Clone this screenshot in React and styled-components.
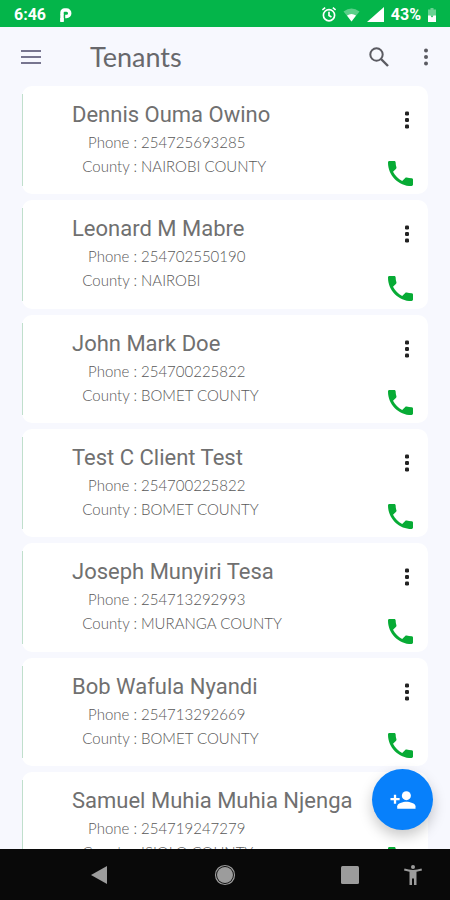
import React from "react";
import styled, { createGlobalStyle } from "styled-components";

const GlobalStyle = createGlobalStyle`
  * { box-sizing: border-box; }
  body { margin: 0; background: #f7f8fe; font-family: Roboto, sans-serif; }
  button { border: 0; padding: 0; background: none; color: inherit; font: inherit; cursor: pointer; }
  svg { display: block; }
  h1, h2, p, ul, dl, dd { margin: 0; padding: 0; }
`;

const Screen = styled.div`
  display: flex;
  flex-direction: column;
  height: 100vh;
  overflow: hidden;
  background: #f7f8fe;
`;

const StatusBar = styled.div`
  display: flex;
  align-items: center;
  flex: none;
  height: 27px;
  padding: 2px 14px 0 14px;
  background: #04b54a;
  color: #fff;
  font-size: 16px;
  font-weight: 700;
`;

const StatusIcons = styled.div`
  display: flex;
  align-items: center;
  gap: 7px;
  margin-left: auto;
`;

const ParkingMark = styled.svg`
  margin-left: 14px;
`;

const Toolbar = styled.header`
  display: flex;
  align-items: center;
  flex: none;
  height: 59px;
  padding: 0 18px 0 20px;
  color: #5b5b62;
`;

const IconButton = styled.button`
  display: grid;
  place-items: center;
  flex: none;
  width: ${(p) => p.$width}px;
  height: 32px;
`;

const Title = styled.h1`
  flex: 1;
  margin-left: 48px;
  color: #68686c;
  font: 400 27px/36px Lato, sans-serif;
`;

const ToolbarActions = styled.div`
  display: flex;
  gap: 30px;
`;

const TenantList = styled.ul`
  display: flex;
  flex: 1;
  flex-direction: column;
  gap: 6px;
  min-height: 0;
  padding: 0 22px;
  overflow: hidden;
  list-style: none;
`;

const Card = styled.li`
  position: relative;
  display: flex;
  flex: 0 0 14.2%;
  justify-content: space-between;
  min-height: 108px;
  padding: 14px 15px 5px 50px;
  border-radius: 10px;
  background: #fff;

  &::before {
    content: "";
    position: absolute;
    top: 8px;
    bottom: 8px;
    left: 0;
    width: 1px;
    background: #c0dfcc;
  }
`;

const Name = styled.h2`
  color: #707070;
  font-size: 22px;
  font-weight: 400;
  line-height: 30px;
  white-space: nowrap;
`;

const Details = styled.dl`
  display: grid;
  grid-template-columns: 65px auto;
  column-gap: 4px;
  color: #585858;
  font: 300 15px/24px Lato, sans-serif;
  white-space: nowrap;

  dt { text-align: right; }
`;

const CardActions = styled.div`
  display: flex;
  flex-direction: column;
  align-items: flex-end;
  justify-content: space-between;
`;

const MenuButton = styled.button`
  display: grid;
  place-items: center;
  width: 12px;
  height: 40px;
  color: #222;
`;

const CallButton = styled.button`
  display: grid;
  place-items: center;
  width: 26px;
  height: 31px;
  color: #07ab35;
`;

const AddButton = styled.button`
  position: fixed;
  right: 17px;
  bottom: 70px;
  display: grid;
  place-items: center;
  width: 61px;
  height: 61px;
  border-radius: 50%;
  background: #0780fb;
  color: #fff;
  box-shadow: 0 6px 14px rgba(0, 0, 0, 0.22);
`;

const NavBar = styled.nav`
  display: flex;
  align-items: center;
  gap: 45px;
  flex: none;
  height: 51px;
  padding: 0 28px 0 90px;
  background: #090909;
  color: #9c9c9c;
`;

const NavKeys = styled.div`
  display: flex;
  flex: 1;
  align-items: center;
  justify-content: space-between;
`;

const Dots = () => (
  <svg width="6" height="18" viewBox="0 0 6 18" fill="currentColor" aria-hidden="true">
    <circle cx="3" cy="2.5" r="2" />
    <circle cx="3" cy="9" r="2" />
    <circle cx="3" cy="15.5" r="2" />
  </svg>
);

const SquareDots = () => (
  <svg width="6" height="18" viewBox="0 0 6 18" fill="currentColor" aria-hidden="true">
    <rect x="1" y="0.5" width="4" height="4" rx="1.2" />
    <rect x="1" y="7" width="4" height="4" rx="1.2" />
    <rect x="1" y="13.5" width="4" height="4" rx="1.2" />
  </svg>
);

const tenants = [
  { name: "Dennis Ouma Owino", phone: "254725693285", county: "NAIROBI COUNTY" },
  { name: "Leonard M Mabre", phone: "254702550190", county: "NAIROBI" },
  { name: "John Mark Doe", phone: "254700225822", county: "BOMET COUNTY" },
  { name: "Test C Client Test", phone: "254700225822", county: "BOMET COUNTY" },
  { name: "Joseph Munyiri Tesa", phone: "254713292993", county: "MURANGA COUNTY" },
  { name: "Bob Wafula Nyandi", phone: "254713292669", county: "BOMET COUNTY" },
  { name: "Samuel Muhia Muhia Njenga", phone: "254719247279", county: "ISIOLO COUNTY" },
];

const TenantCard = ({ tenant }) => (
  <Card>
    <div>
      <Name>{tenant.name}</Name>
      <Details>
        <dt>Phone :</dt>
        <dd>{tenant.phone}</dd>
        <dt>County :</dt>
        <dd>{tenant.county}</dd>
      </Details>
    </div>
    <CardActions>
      <MenuButton aria-label={`Options for ${tenant.name}`}>
        <SquareDots />
      </MenuButton>
      <CallButton aria-label={`Call ${tenant.name}`}>
        <svg width="25" height="25" viewBox="3 3 18 18" fill="currentColor" aria-hidden="true">
          <path d="M20 15.5c-1.25 0-2.45-.2-3.57-.57-.35-.11-.74-.03-1.02.24l-2.2 2.2c-2.83-1.44-5.15-3.75-6.59-6.59l2.2-2.21c.28-.26.36-.65.25-1C8.7 6.45 8.5 5.25 8.5 4c0-.55-.45-1-1-1H4c-.55 0-1 .45-1 1 0 9.39 7.61 17 17 17 .55 0 1-.45 1-1v-3.5c0-.55-.45-1-1-1z" />
        </svg>
      </CallButton>
    </CardActions>
  </Card>
);

export default function App() {
  return (
    <Screen>
      <GlobalStyle />
      <StatusBar>
        <span>6:46</span>
        <ParkingMark width="12" height="14" viewBox="0 0 12 14" fill="none" aria-hidden="true">
          <path
            d="M2 13.5V10M2 6.5V4.500A2.500 2.500 0 0 1 4.500 2H6.500a3.200 3.200 0 0 1 0 6.500H5.200"
            stroke="#fff"
            strokeWidth="3.4"
          />
          <path d="M.3 6h3.400v8H.3z" fill="#fff" />
        </ParkingMark>
        <StatusIcons>
          <svg width="14" height="15" viewBox="2 1.5 20 21" fill="none" stroke="#fff" strokeWidth="2.4" aria-hidden="true">
            <circle cx="12" cy="13" r="8" />
            <path d="M12 8v5.5l3.5 2M2.5 5.5l4-3.3M21.5 5.5l-4-3.3" />
          </svg>
          <svg width="17" height="14" viewBox="0 0 17 14" aria-hidden="true">
            <path d="M0.5 3.5Q8.5-2.5 16.5 3.5L8.5 13.5z" fill="#fff" opacity="0.35" />
            <path d="M4 7.6Q8.5 4.5 13 7.6L8.5 13.5z" fill="#fff" />
          </svg>
          <svg width="17" height="15" viewBox="0 0 17 15" aria-hidden="true">
            <path d="M0 15L17 0v15z" fill="#fff" />
          </svg>
          <span>43%</span>
          <svg width="8" height="14" viewBox="0 0 8 14" fill="#fff" aria-hidden="true">
            <path d="M2.5 0h3v1.5H8V8H0V1.5h2.5z" opacity="0.4" />
            <path d="M0 7.5h2.5L4 9.500l1.500-2H8V14H0z" />
          </svg>
        </StatusIcons>
      </StatusBar>

      <Toolbar>
        <IconButton $width={22} aria-label="Open menu">
          <svg width="22" height="16" viewBox="0 0 22 16" stroke="#77758f" strokeWidth="2" aria-hidden="true">
            <path d="M1 2h20M1 8h20M1 14h20" />
          </svg>
        </IconButton>
        <Title>Tenants</Title>
        <ToolbarActions>
          <IconButton $width={22} aria-label="Search">
            <svg width="20" height="20" viewBox="0 0 20 20" fill="none" stroke="currentColor" strokeWidth="2" aria-hidden="true">
              <circle cx="7.5" cy="7.5" r="6.2" />
              <path d="M12 12l7 7" strokeWidth="2.4" />
            </svg>
          </IconButton>
          <IconButton $width={12} aria-label="More options">
            <Dots />
          </IconButton>
        </ToolbarActions>
      </Toolbar>

      <TenantList>
        {tenants.map((tenant) => (
          <TenantCard key={tenant.name} tenant={tenant} />
        ))}
      </TenantList>

      <AddButton aria-label="Add tenant">
        <svg width="26" height="20" viewBox="0 0 27 20" fill="#fff" aria-hidden="true">
          <circle cx="17" cy="5.5" r="4.7" />
          <path d="M7.5 19v-2.5c0-3.2 6-4.8 9.5-4.8s9.5 1.6 9.5 4.8V19z" />
          <path d="M4 4.5h2.4v3.4H10v2.4H6.4v3.5H4v-3.5H.5V7.900H4z" />
        </svg>
      </AddButton>

      <NavBar aria-label="System navigation">
        <NavKeys>
          <button aria-label="Back">
            <svg width="18" height="20" viewBox="0 0 18 20" fill="currentColor" aria-hidden="true">
              <path d="M1 10L17 1v18z" />
            </svg>
          </button>
          <button aria-label="Home">
            <svg width="22" height="22" viewBox="0 0 22 22" aria-hidden="true">
              <circle cx="11" cy="11" r="9.5" fill="none" stroke="currentColor" strokeWidth="1.2" />
              <circle cx="11" cy="11" r="8" fill="currentColor" />
            </svg>
          </button>
          <button aria-label="Recent apps">
            <svg width="18" height="18" viewBox="0 0 18 18" fill="currentColor" aria-hidden="true">
              <rect width="18" height="18" rx="1.5" />
            </svg>
          </button>
        </NavKeys>
        <button aria-label="Accessibility">
          <svg width="18" height="20" viewBox="0 0 18 20" fill="currentColor" aria-hidden="true">
            <circle cx="9" cy="2" r="2" />
            <path d="M.5 3.6Q9 6.2 17.5 3.6L18 5.5l-5.500 1.300V20h-2.500v-6.500H8V20H5.500V6.800L0 5.500z" />
          </svg>
        </button>
      </NavBar>
    </Screen>
  );
}
